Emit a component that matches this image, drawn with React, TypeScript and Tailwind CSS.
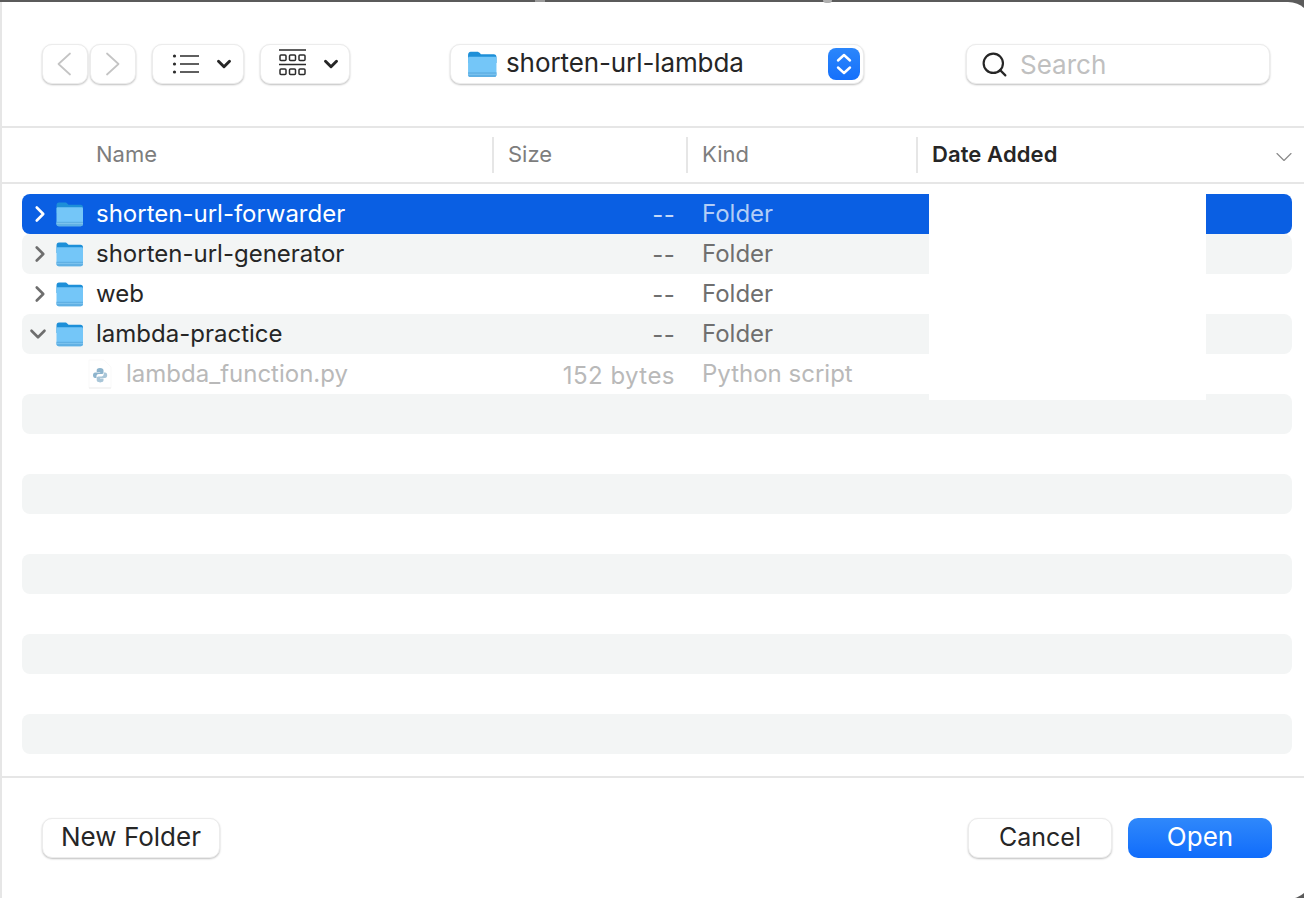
import { ChevronDown, ChevronRight, Search } from "lucide-react";

function FolderIcon({ className = "" }: { className?: string }) {
  return (
    <svg className={className} viewBox="0 0 28 26" fill="none">
      <path d="M1 4.5C1 2.8 1.9 1.5 3.5 1.5H9.5C10.6 1.5 11.2 2 12 2.8L13 3.8H25C26.6 3.8 27.5 4.9 27.5 6.5V12H1V4.5Z" fill="#1d8fd8" />
      <path d="M1 7.5C1 6.7 1.6 6.2 2.4 6.2H26.1C26.9 6.2 27.5 6.7 27.5 7.5V23C27.5 24.4 26.6 25.2 25.2 25.2H3.3C1.9 25.2 1 24.4 1 23V7.5Z" fill="#74c6f8" />
      <path d="M1 20.8H27.5V23C27.5 24.4 26.6 25.2 25.2 25.2H3.3C1.9 25.2 1 24.4 1 23V20.8Z" fill="#5fb0e4" />
      <path d="M1 22.6H27.5" stroke="#8ccdf5" strokeWidth="0.7" />
    </svg>
  );
}

function PythonFileIcon() {
  return (
    <svg className="w-[26px] h-[30px]" viewBox="0 0 26 30" fill="none">
      <path d="M2 1H17L24 8V29H2V1Z" fill="#ffffff" stroke="#f7f7f7" strokeWidth="0.8" />
      <path d="M2 29H24" stroke="#e8e8e8" strokeWidth="0.8" />
      <path d="M13 9C10.3 9 9.7 10 9.7 11.3V12.9H13.2V13.5H8.2C6.8 13.5 6 14.7 6 16.2C6 17.8 6.8 18.9 8.1 18.9H9.5V17.1C9.5 15.9 10.5 15 11.7 15H14.8C15.8 15 16.5 14.2 16.5 13.2V11.3C16.5 10 15.5 9 13 9Z" fill="#8db4cd" />
      <path d="M13.2 23.4C15.9 23.4 16.5 22.4 16.5 21.1V19.5H13V18.9H18C19.4 18.9 20.2 17.7 20.2 16.2C20.2 14.6 19.4 13.5 18.1 13.5H16.7V15.3C16.7 16.5 15.7 17.4 14.5 17.4H11.4C10.4 17.4 9.7 18.2 9.7 19.2V21.1C9.7 22.4 10.7 23.4 13.2 23.4Z" fill="#a9c6d8" />
    </svg>
  );
}

interface FileRow {
  name: string;
  size: string;
  kind: string;
  expanded?: boolean;
  selected?: boolean;
  file?: boolean;
}

const rows: FileRow[] = [
  { name: "shorten-url-forwarder", size: "--", kind: "Folder", selected: true },
  { name: "shorten-url-generator", size: "--", kind: "Folder" },
  { name: "web", size: "--", kind: "Folder" },
  { name: "lambda-practice", size: "--", kind: "Folder", expanded: true },
  { name: "lambda_function.py", size: "152 bytes", kind: "Python script", file: true },
];

const blanks = [0, 1, 2, 3, 4, 5, 6, 7, 8];

function Row({ row, striped }: { row: FileRow; striped: boolean }) {
  const bg = row.selected ? "bg-[#0a5fe3] rounded-[8px]" : striped ? "bg-[#f3f5f5] rounded-[8px]" : "";
  const nameColor = row.selected ? "text-white" : row.file ? "text-[#b9b9b9]" : "text-[#262626]";
  const sizeColor = row.selected ? "text-[#c4d8f8]" : row.file ? "text-[#b9b9b9]" : "text-[#6f6f6f]";
  const kindColor = row.selected ? "text-[#b3cdf6]" : row.file ? "text-[#b9b9b9]" : "text-[#6f6f6f]";
  const chevronColor = row.selected ? "text-white" : "text-[#6e6e6e]";

  return (
    <div className={`flex items-center h-[40px] ${bg}`}>
      <div className="w-[34px] flex justify-center shrink-0">
        {row.file ? null : row.expanded ? (
          <ChevronDown className={`w-[26px] h-[26px] -ml-[2px] ${chevronColor}`} strokeWidth={2.4} />
        ) : (
          <ChevronRight className={`w-[26px] h-[26px] ml-[2px] ${chevronColor}`} strokeWidth={2.4} />
        )}
      </div>
      {row.file ? (
        <div className="flex items-center shrink-0 ml-[31px] w-[39px]">
          <PythonFileIcon />
        </div>
      ) : (
        <div className="w-[40px] shrink-0 flex items-center">
          <FolderIcon className="w-[29px] h-[26px] -ml-[1px]" />
        </div>
      )}
      <div className={`text-[24px] leading-none ${nameColor} ${row.file ? "w-[396px] -mr-[30px]" : "w-[396px]"}`}>
        {row.name}
      </div>
      <div className={`w-[183px] text-right text-[24px] leading-none ${sizeColor} ${row.file ? "mt-[3px] tracking-[0.45px]" : "mt-[2px] tracking-[0.3px]"}`}>
        {row.size}
      </div>
      <div className={`ml-[27px] text-[24px] leading-none ${kindColor}`}>{row.kind}</div>
    </div>
  );
}

function ToolButton({ className, children }: { className: string; children: React.ReactNode }) {
  return (
    <div className={`h-[40px] flex items-center bg-white rounded-[10px] border border-[#ececec] shadow-[0_1px_2px_rgba(0,0,0,0.25)] ${className}`}>
      {children}
    </div>
  );
}

export default function App() {
  return (
    <div className="relative w-[1304px] h-[898px] overflow-hidden bg-[#5b5b5b] pt-[2px] font-['Inter','Liberation_Sans',sans-serif]">
      <div className="absolute top-0 left-[535px] w-[10px] h-[2px] bg-[#9a9a9a]" />
      <div className="absolute top-0 left-[823px] w-[9px] h-[3px] rounded-b-full bg-[#b0b0b0]" />
      <div className="w-[1312px] h-[897px] bg-white rounded-r-[24px] border-l-2 border-[#e6e6e6] flex flex-col">
        {/* toolbar */}
        <div className="h-[124px] shrink-0 flex items-start pt-[42px] pl-[40px]">
          <div className="flex gap-[2px]">
            <ToolButton className="w-[46px] justify-center">
              <svg className="w-[14px] h-[24px] -ml-[3px]" viewBox="0 0 14 24" fill="none" stroke="#c4c4c4" strokeWidth="1.7" strokeLinecap="round" strokeLinejoin="round">
                <path d="M13 1.5L1.5 12L13 22.5" />
              </svg>
            </ToolButton>
            <ToolButton className="w-[46px] justify-center">
              <svg className="w-[14px] h-[24px]" viewBox="0 0 14 24" fill="none" stroke="#c4c4c4" strokeWidth="1.7" strokeLinecap="round" strokeLinejoin="round">
                <path d="M1 1.5L12.5 12L1 22.5" />
              </svg>
            </ToolButton>
          </div>
          <ToolButton className="ml-[16px] w-[92px] pl-[19px]">
            <svg className="w-[28px] h-[22px] -mt-[1px]" viewBox="0 0 28 22" fill="none">
              <circle cx="2.5" cy="3" r="1.6" fill="#2b2b2b" />
              <circle cx="2.5" cy="11" r="1.6" fill="#2b2b2b" />
              <circle cx="2.5" cy="19" r="1.6" fill="#2b2b2b" />
              <path d="M8 3H27M8 11H27M8 19H27" stroke="#2b2b2b" strokeWidth="1.7" />
            </svg>
            <ChevronDown className="ml-[13px] w-[22px] h-[22px] text-[#262626]" strokeWidth={3.2} />
          </ToolButton>
          <ToolButton className="ml-[16px] w-[90px] pl-[18px]">
            <svg className="w-[28px] h-[28px] -mt-[2px]" viewBox="0 0 28 28" fill="none" stroke="#2b2b2b">
              <path d="M0 1H27M0 15.5H27" strokeWidth="1.5" />
              <rect x="1" y="6" width="6" height="5.5" rx="1" strokeWidth="1.5" />
              <rect x="10.5" y="6" width="6" height="5.5" rx="1" strokeWidth="1.5" />
              <rect x="20" y="6" width="6" height="5.5" rx="1" strokeWidth="1.5" />
              <rect x="1" y="20" width="6" height="5.5" rx="1" strokeWidth="1.5" />
              <rect x="10.5" y="20" width="6" height="5.5" rx="1" strokeWidth="1.5" />
              <rect x="20" y="20" width="6" height="5.5" rx="1" strokeWidth="1.5" />
            </svg>
            <ChevronDown className="ml-[13px] w-[22px] h-[22px] text-[#262626]" strokeWidth={3.2} />
          </ToolButton>
          <ToolButton className="ml-[100px] w-[414px] pl-[16px]">
            <FolderIcon className="w-[30px] h-[30px]" />
            <span className="ml-[9px] pb-[2px] text-[26px] leading-none tracking-[-0.1px] text-[#262626]">shorten-url-lambda</span>
            <div className="ml-auto mr-[3px] w-[32px] h-[32px] rounded-[8px] bg-gradient-to-b from-[#2b86fb] to-[#1570fb]">
              <svg className="w-[32px] h-[32px]" viewBox="0 0 32 32" fill="none" stroke="#ffffff" strokeWidth="2.4" strokeLinecap="round" strokeLinejoin="round">
                <path d="M10 12.5L16 7L22 12.5M10 19.5L16 25L22 19.5" />
              </svg>
            </div>
          </ToolButton>
          <ToolButton className="ml-[102px] w-[304px] pl-[13px]">
            <Search className="w-[29px] h-[29px] text-[#262626]" strokeWidth={1.8} />
            <span className="ml-[11px] mt-[2px] text-[26px] leading-none text-[#c0c0c0]">Search</span>
          </ToolButton>
        </div>

        {/* column header */}
        <div className="h-[58px] shrink-0 flex items-center border-y-2 border-[#e6e6e6] text-[22px] leading-none text-[#7d7d7d] pr-[8px]">
          <div className="pl-[94px] w-[490px] pb-[2px]">Name</div>
          <div className="w-[194px] h-[36px] flex items-center pl-[14px] pb-[2px] border-l-2 border-[#e6e6e6]">Size</div>
          <div className="w-[230px] h-[36px] flex items-center pl-[14px] pb-[2px] border-l-2 border-[#e6e6e6]">Kind</div>
          <div className="w-[379px] h-[36px] flex items-center pl-[14px] pb-[2px] border-l-2 border-[#e6e6e6] font-semibold tracking-[0.1px] text-[#262626]">
            Date Added
            <ChevronDown className="ml-auto -mr-[3px] mt-[5px] w-[28px] h-[28px] text-[#8a8a8a]" strokeWidth={1} />
          </div>
        </div>

        {/* file list */}
        <div className="relative w-[1270px] ml-[20px] mt-[10px] shrink-0">
          {rows.map((row, i) => (
            <Row key={row.name} row={row} striped={i % 2 === 1} />
          ))}
          {blanks.map((n) => (
            <div key={n} className={`h-[40px] ${n % 2 === 0 ? "bg-[#f3f5f5] rounded-[8px]" : ""}`} />
          ))}
          {/* redacted date column */}
          <div className="absolute left-[907px] -top-[10px] w-[277px] h-[216px] bg-white" />
        </div>

        {/* footer */}
        <div className="mt-[22px] h-[121px] border-t-2 border-[#e6e6e6] flex items-start pt-[40px] pl-[40px] text-[25px] leading-none">
          <div className="w-[178px] h-[40px] flex items-center justify-center pb-[2px] rounded-[10px] bg-white border border-[#ececec] shadow-[0_1px_2px_rgba(0,0,0,0.25)] text-[26px] text-[#262626]">
            New Folder
          </div>
          <div className="ml-[748px] w-[144px] h-[40px] flex items-center justify-center pb-[2px] rounded-[10px] bg-white border border-[#ececec] shadow-[0_1px_2px_rgba(0,0,0,0.25)] text-[#262626]">
            Cancel
          </div>
          <div className="ml-[16px] w-[144px] h-[40px] flex items-center justify-center pb-[2px] rounded-[10px] bg-gradient-to-b from-[#2f88fb] to-[#0f6cfb] text-[26px] text-white">
            Open
          </div>
        </div>
      </div>
    </div>
  );
}
